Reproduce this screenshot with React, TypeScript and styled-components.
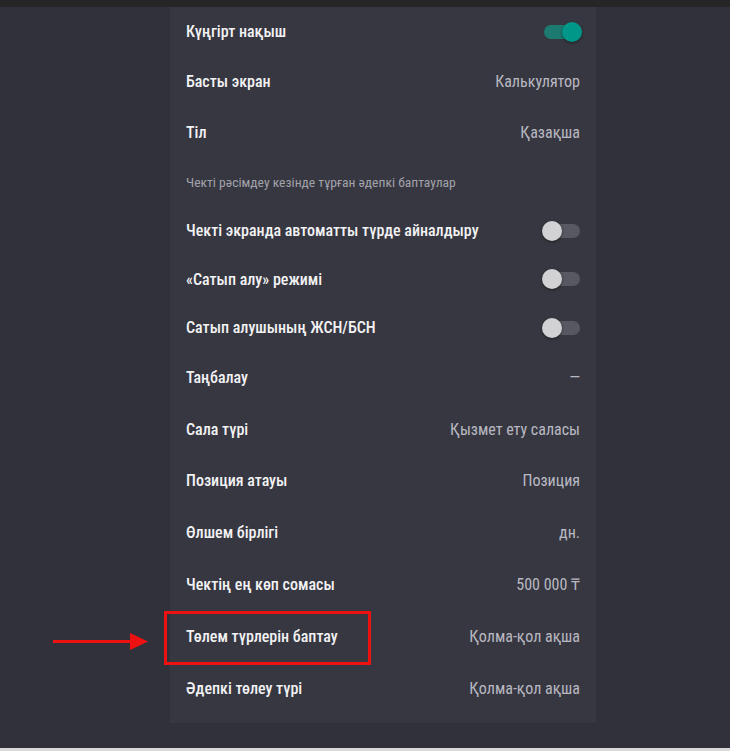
import React from "react";
import styled, { createGlobalStyle } from "styled-components";

const Global = createGlobalStyle`
  html, body { margin: 0; padding: 0; }
  body {
    background: #31313b;
    font-family: "Roboto Condensed", Roboto, "Liberation Sans Narrow", sans-serif;
    font-stretch: condensed;
  }
`;

const Page = styled.div`
  position: relative;
  width: 730px;
  height: 751px;
  overflow: hidden;
  background: #31313b;
  display: flex;
  flex-direction: column;
`;

const TopBar = styled.div`
  height: 7px;
  background: #262626;
  flex: none;
`;

const Main = styled.div`
  flex: 1;
  display: flex;
  justify-content: flex-start;
  padding-left: 170px;
`;

const Panel = styled.div`
  width: 426px;
  height: 716px;
  background: #373741;
  display: flex;
  flex-direction: column;
  padding: 0 16px 0 16px;
  box-sizing: border-box;
`;

const BottomStrip = styled.div`
  height: 3px;
  background: #d9d9d9;
  flex: none;
`;

const Row = styled.div<{ $h: number }>`
  height: ${(p) => p.$h}px;
  display: flex;
  align-items: center;
  justify-content: space-between;
  flex: none;
`;

const Label = styled.span`
  color: #f2f2f4;
  font-size: 16px;
  font-weight: 500;
`;

const Value = styled.span`
  color: #b9b9c1;
  font-size: 16px;
  font-weight: 400;
`;

const Caption = styled.span`
  color: #a2a2aa;
  font-size: 13.6px;
  font-weight: 400;
`;

const Track = styled.div<{ $on: boolean }>`
  position: relative;
  width: 36px;
  height: 14px;
  border-radius: 7px;
  background: ${(p) => (p.$on ? "#1c7a71" : "#585862")};
`;

const Thumb = styled.div<{ $on: boolean }>`
  position: absolute;
  top: -3px;
  left: ${(p) => (p.$on ? "18px" : "-2px")};
  width: 20px;
  height: 20px;
  border-radius: 50%;
  background: ${(p) => (p.$on ? "#009688" : "#d2d2d4")};
  box-shadow: 0 1px 3px rgba(0, 0, 0, 0.45);
`;

const Highlight = styled.div`
  position: absolute;
  left: 164px;
  top: 611px;
  width: 207px;
  height: 54px;
  box-sizing: border-box;
  border: 3px solid #ee1111;
`;

const Arrow = styled.svg`
  position: absolute;
  left: 50px;
  top: 630px;
`;

function Toggle({ on }: { on: boolean }) {
  return (
    <Track $on={on}>
      <Thumb $on={on} />
    </Track>
  );
}

type Item =
  | { kind: "toggle"; label: string; on: boolean; h: number }
  | { kind: "value"; label: string; value: string; h: number }
  | { kind: "caption"; label: string; h: number };

const items: Item[] = [
  { kind: "toggle", label: "Күңгірт нақыш", on: true, h: 49 },
  { kind: "value", label: "Басты экран", value: "Калькулятор", h: 51 },
  { kind: "value", label: "Тіл", value: "Қазақша", h: 51 },
  { kind: "caption", label: "Чекті рәсімдеу кезінде тұрған әдепкі баптаулар", h: 48 },
  { kind: "toggle", label: "Чекті экранда автоматты түрде айналдыру", on: false, h: 49 },
  { kind: "toggle", label: "«Сатып алу» режимі", on: false, h: 48 },
  { kind: "toggle", label: "Сатып алушының ЖСН/БСН", on: false, h: 49 },
  { kind: "value", label: "Таңбалау", value: "—", h: 51 },
  { kind: "value", label: "Сала түрі", value: "Қызмет ету саласы", h: 52 },
  { kind: "value", label: "Позиция атауы", value: "Позиция", h: 51 },
  { kind: "value", label: "Өлшем бірлігі", value: "дн.", h: 52 },
  { kind: "value", label: "Чектің ең көп сомасы", value: "500 000 ₸", h: 52 },
  { kind: "value", label: "Төлем түрлерін баптау", value: "Қолма-қол ақша", h: 52 },
  { kind: "value", label: "Әдепкі төлеу түрі", value: "Қолма-қол ақша", h: 52 },
];

export default function App() {
  return (
    <Page>
      <Global />
      <TopBar />
      <Main>
        <Panel>
          {items.map((it, i) => (
            <Row key={i} $h={it.h}>
              {it.kind === "caption" ? (
                <Caption>{it.label}</Caption>
              ) : (
                <Label>{it.label}</Label>
              )}
              {it.kind === "toggle" && <Toggle on={it.on} />}
              {it.kind === "value" && <Value>{it.value}</Value>}
            </Row>
          ))}
        </Panel>
      </Main>
      <BottomStrip />
      <Highlight />
      <Arrow width="100" height="24" viewBox="0 0 100 24">
        <line x1="3" y1="11.5" x2="86" y2="11.5" stroke="#ee1111" strokeWidth="3" />
        <polygon points="80,3 98,11.5 80,20" fill="#ee1111" />
      </Arrow>
    </Page>
  );
}
